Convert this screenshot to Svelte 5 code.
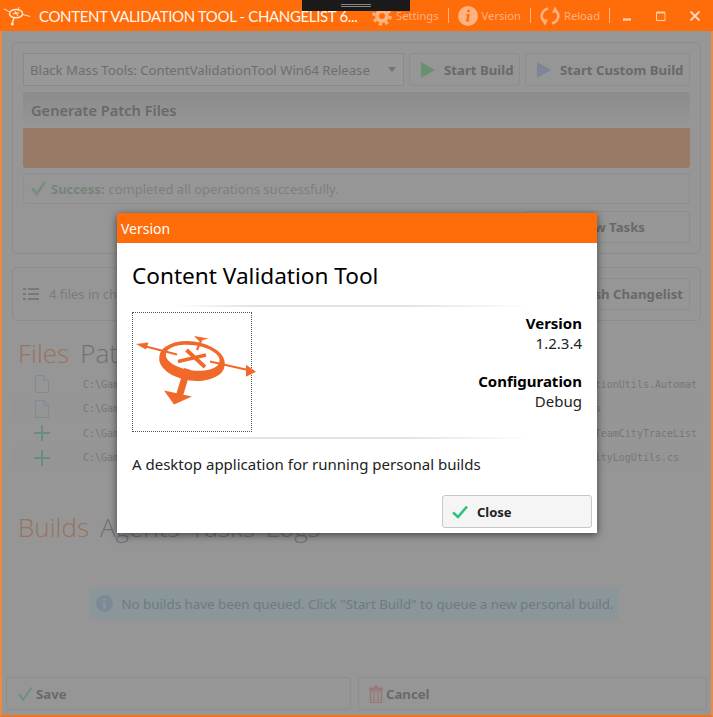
<script>
  const base = "C:\\Games\\BlackMass\\Engine\\Source\\Programs\\ContentValidationTool\\";
  const files = [
    { kind: "edit", path: base + "Automation\\Tests\\LocationUtils.Automation.cs" },
    { kind: "edit", path: base + "Automation\\Tests\\Io.cs" },
    { kind: "add", path: base + "Diagnostic\\Listeners\\TeamCityTraceListener.cs" },
    { kind: "add", path: base + "Diagnostic\\Logs\\TeamCityLogUtils.cs" }
  ];
</script>

<div class="window">
  <header class="titlebar">
    <svg class="app-logo" viewBox="0 0 32 22" width="30" height="21">
      <g fill="none" stroke="#ffe6d2">
        <ellipse cx="15" cy="9" rx="7" ry="4.5" stroke-width="1.6" />
        <path d="M12 9l6-1M14 6.5l3 5" stroke-width="1.2" />
        <path d="M8 7L2 4M22 10l8 2M17 5l1-3" stroke-width="1" />
        <path d="M13 13l-2 6" stroke-width="1.6" />
      </g>
      <circle cx="11" cy="20" r="1.6" fill="#ffe6d2" />
    </svg>
    <span class="app-title">CONTENT VALIDATION TOOL - CHANGELIST 6...</span>
    <nav class="commands">
      <span class="command">
        <svg viewBox="0 0 20 20" width="20" height="20">
          <circle cx="10" cy="10" r="8.2" fill="none" stroke="#ffb27f" stroke-width="3" stroke-dasharray="3.2 3.24" />
          <circle cx="10" cy="10" r="5" fill="none" stroke="#ffb27f" stroke-width="4" />
        </svg>
        Settings
      </span>
      <i class="sep"></i>
      <span class="command">
        <svg viewBox="0 0 20 20" width="20" height="20">
          <circle cx="10" cy="10" r="10" fill="#ffb27f" />
          <path d="M10.6 3.6a1.4 1.4 0 1 1 0 2.8a1.4 1.4 0 0 1 0-2.8zM8 8.2h3.8l-1.3 6.2h1.2l-.2 1.2H7.8l1.3-6.2H7.8z" fill="#ff6c0a" />
        </svg>
        Version
      </span>
      <i class="sep"></i>
      <span class="command">
        <svg viewBox="0 0 20 20" width="20" height="20">
          <g fill="none" stroke="#ffb27f" stroke-width="2.6">
            <path d="M8 2.5C2 4-.5 11 4 15" />
            <path d="M12 17.5C18 16 20.500 9 16 5" />
          </g>
          <path d="M1 13l7 .5-3 6zM19 7l-7-.5 3-6z" fill="#ffb27f" />
        </svg>
        Reload
      </span>
      <i class="sep"></i>
    </nav>
    <div class="window-buttons">
      <svg viewBox="0 0 10 10" width="10" height="10"><path d="M1 8.5h8" stroke="#ffd0ae" stroke-width="2.4" /></svg>
      <svg viewBox="0 0 10 10" width="10" height="10"><path d="M.5 1.5h8.500v8H.5z" fill="none" stroke="#ffd0ae" /><path d="M.5 1.5h8.500" stroke="#ffd0ae" stroke-width="2" /></svg>
      <svg viewBox="0 0 10 10" width="10" height="10"><path d="M.5.5l9 9M9.5.5l-9 9" stroke="#ffe0c8" stroke-width="1.8" /></svg>
    </div>
  </header>

  <main class="content">
    <section class="panel build-panel">
      <div class="build-row">
        <div class="select">
          <span>Black Mass Tools: ContentValidationTool Win64 Release</span>
          <i class="caret"></i>
        </div>
        <button class="btn start">
          <svg viewBox="0 0 14 16" width="14" height="16"><path d="M0 0l14 8-14 8z" fill="#b0f0bc" /></svg>
          Start Build
        </button>
        <button class="btn custom">
          <svg viewBox="0 0 14 16" width="14" height="16"><path d="M0 0l14 8-14 8z" fill="#d0e0ff" /></svg>
          Start Custom Build
        </button>
      </div>
      <div class="progress">
        <div class="progress-head">Generate Patch Files</div>
        <div class="progress-bar"></div>
      </div>
      <div class="success">
        <svg viewBox="0 0 16 16" width="17" height="17"><path d="M1 8.5l2.500-1.500 2.500 4L13.500 1l1.500 1L6.500 15.500z" fill="#c8ecce" /></svg>
        <b>Success:</b>
        <span>completed all operations successfully.</span>
      </div>
      <div class="tasks-row">
        <button class="btn tasks">View Tasks</button>
      </div>
    </section>

    <section class="panel changelist">
      <svg viewBox="0 0 16 14" width="16" height="14">
        <path d="M5 2h11M5 7h11M5 12h11" stroke="#c8c8c8" stroke-width="2" />
        <path d="M0 2h3M0 7h3M0 12h3" stroke="#c8c8c8" stroke-width="2" />
      </svg>
      <span class="changelist-label">4 files in changelist</span>
      <button class="btn refresh">Refresh Changelist</button>
    </section>

    <div class="tabs file-tabs">
      <span class="on">Files</span><span>Patches</span>
    </div>
    <ul class="files">
      {#each files as file}
        <li>
          <span class="file-icon">
            {#if file.kind === "edit"}
              <svg viewBox="0 0 14 18" width="14" height="18"><path d="M.5.5h8l5 5v12H.5zM8.500.5v5h5" fill="none" stroke="#d4e8fa" /></svg>
            {:else}
              <svg viewBox="0 0 16 16" width="16" height="16"><path d="M8 0v16M0 8h16" stroke="#aaf0d0" stroke-width="2" /></svg>
            {/if}
          </span>
          <span class="file-path">{file.path}</span>
        </li>
      {/each}
    </ul>

    <div class="tabs build-tabs">
      <span class="on">Builds</span><span>Agents</span><span>Tasks</span><span>Logs</span>
    </div>
    <div class="queue">
      <div class="info">
        <svg viewBox="0 0 16 16" width="17" height="17">
          <circle cx="8" cy="8" r="8" fill="#cfe6f8" />
          <path d="M6.800 3h2.400v2.300H6.800zM6.800 7h2.400v6H6.800z" fill="#e6fbff" />
        </svg>
        No builds have been queued. Click "Start Build" to queue a new personal build.
      </div>
    </div>
    <footer class="actions">
      <button class="btn action save">
        <svg viewBox="0 0 16 16" width="16" height="16"><path d="M1 8.5l2-1 3 4.500L14 1l1.500 1L6 15.500z" fill="#b4f0d0" /></svg>
        Save
      </button>
      <button class="btn action">
        <svg viewBox="0 0 14 18" width="14" height="18">
          <path d="M5 1.500h4M0 3.500h14" stroke="#ffc4c4" stroke-width="2" />
          <path d="M1.500 5.500h11v12h-11zM5 7v9M9 7v9" fill="none" stroke="#ffc4c4" stroke-width="1.3" />
        </svg>
        Cancel
      </button>
    </footer>
  </main>

  <div class="overlay"></div>

  <div class="drag-bar"><i></i><i></i></div>

  <div class="dialog">
    <div class="dialog-head">Version</div>
    <div class="dialog-body">
      <h1>Content Validation Tool</h1>
      <hr class="rule" />
      <div class="about">
        <div class="logo-box">
          <svg viewBox="0 0 120 120" width="120" height="120">
            <g fill="#f0692b" stroke="#f0692b">
              <path fill-rule="evenodd" stroke="none" d="M27.300 44.700A33 19 8 1 0 92.700 53.300A33 19 8 1 0 27.300 44.700zM34 41.900A27 12 8 1 1 87.400 49.500A27 12 8 1 1 34 41.900z" />
              <path d="M46 49.500L74 43M54.500 38L73 55" stroke-width="3.800" />
              <path d="M45 42.500L8 33M65 38l5-12M78 49.500l38 8.500" stroke-width="2.200" />
              <path d="M55.500 57L47 85" stroke-width="7" />
              <path stroke="none" d="M4 32l12.500-1.500L14 37.500zM62 24l14.500 2.500L67 29zM124 59.700l-10-7 0 12zM42 92.500L32 78.500l28 6z" />
            </g>
          </svg>
        </div>
        <dl>
          <dt>Version</dt>
          <dd>1.2.3.4</dd>
          <dt>Configuration</dt>
          <dd>Debug</dd>
        </dl>
      </div>
      <hr class="rule" />
      <p>A desktop application for running personal builds</p>
      <div class="dialog-actions">
        <button class="close">
          <svg viewBox="0 0 16 14" width="16" height="14"><path d="M1 7.500l5 4.500L15 1.500" fill="none" stroke="#2fc27a" stroke-width="2.600" /></svg>
          Close
        </button>
      </div>
    </div>
  </div>
</div>

<style>
  :global(body) {
    margin: 0;
  }

  .window {
    position: relative;
    width: 713px;
    height: 717px;
    box-sizing: border-box;
    display: flex;
    flex-direction: column;
    overflow: hidden;
    background: #fafafa;
    font-family: "Noto Sans", "Open Sans", sans-serif;
  }

  .titlebar {
    height: 31px;
    flex: none;
    display: flex;
    align-items: center;
    background: #ff6c0a;
    padding-left: 2px;
  }

  .app-logo {
    flex: none;
  }

  .app-title {
    width: 318px;
    flex: none;
    margin-left: 7px;
    font-family: "Lato", sans-serif;
    font-size: 15px;
    letter-spacing: -0.35px;
    color: #fff6ee;
    white-space: nowrap;
  }

  .commands {
    display: flex;
    align-items: center;
    margin-left: 15px;
    gap: 9px;
  }

  .command {
    display: flex;
    align-items: center;
    gap: 4px;
    font-size: 11.2px;
    color: #ffb27f;
  }

  .sep {
    width: 1px;
    height: 15px;
    background: #ffb27f;
  }

  .window-buttons {
    display: flex;
    gap: 24px;
    margin-left: 12px;
  }

  .content {
    flex: 1;
    min-height: 0;
    display: flex;
    flex-direction: column;
    padding: 11px 0 0;
    border: solid #ea8a45;
    border-width: 0 2px 2px;
    border-bottom-color: #f0751f;
    color: #b8b8b8;
  }

  .panel {
    margin: 0 10px;
    border: 1px solid #eaeaea;
    border-radius: 5px;
    box-sizing: border-box;
  }

  .build-panel {
    height: 212px;
    padding: 10px;
    display: flex;
    flex-direction: column;
  }

  .build-row {
    display: flex;
    gap: 5px;
    height: 33px;
  }

  .select {
    width: 381px;
    flex: none;
    box-sizing: border-box;
    border: 1px solid #e6e6e6;
    padding: 0 6px;
    display: flex;
    align-items: center;
    justify-content: space-between;
    font-size: 13.15px;
    color: #b8b8b8;
    background: #fdfdfd;
  }

  .caret {
    width: 0;
    height: 0;
    border: 4px solid transparent;
    border-top: 5px solid #c0c0c0;
    border-bottom: 0;
    margin-right: 1px;
  }

  .btn {
    display: flex;
    align-items: center;
    gap: 9px;
    box-sizing: border-box;
    background: #fafafa;
    border: 1px solid #ebebeb;
    border-radius: 3px;
    font: 700 13.2px "Noto Sans", "Open Sans", sans-serif;
    color: #b0b0b0;
    padding: 0 0 0 11px;
    white-space: nowrap;
  }

  .start {
    width: 111px;
  }

  .custom {
    width: 165px;
  }

  .progress {
    margin-top: 6px;
    border-radius: 3px;
    overflow: hidden;
  }

  .progress-head {
    height: 36px;
    padding-left: 8px;
    display: flex;
    align-items: center;
    background: linear-gradient(#e9e9e9, #fcfcfc);
    font-size: 14.6px;
    font-weight: 600;
    color: #b0b0b0;
  }

  .progress-bar {
    height: 40px;
    background: #ffcbaa;
  }

  .success {
    margin-top: 5px;
    height: 31px;
    box-sizing: border-box;
    display: flex;
    align-items: center;
    gap: 4px;
    padding-left: 6px;
    border: 1px solid #eeeeee;
    border-radius: 3px;
    font-size: 13px;
    color: #d4d4d4;
  }

  .success b {
    color: #c4dcc8;
  }

  .tasks-row {
    display: flex;
    justify-content: flex-end;
    margin-top: 7px;
  }

  .tasks {
    width: 165px;
    height: 32px;
    justify-content: flex-end;
    padding: 0 44px 0 0;
  }

  .changelist {
    margin-top: 13px;
    height: 54px;
    display: flex;
    align-items: center;
    padding: 0 10px;
    gap: 10px;
    font-size: 13px;
    color: #cfcfcf;
  }

  .changelist-label {
    flex: 1;
  }

  .refresh {
    height: 32px;
    padding: 0 6px 0 30px;
  }

  .tabs {
    display: flex;
    gap: 11px;
    padding-left: 16px;
    font-size: 26px;
    font-weight: 300;
    line-height: 34px;
    color: #b9bbc8;
    font-family: "Open Sans", sans-serif;
  }

  .tabs .on {
    color: #ffc0a0;
  }

  .file-tabs {
    margin-top: 15px;
  }

  .files {
    list-style: none;
    margin: 2px 10px 0;
    padding: 0;
  }

  .files li {
    height: 24.5px;
    display: flex;
    align-items: center;
    overflow: hidden;
  }

  .files li:nth-child(even) {
    background: #f8f8f8;
  }

  .file-icon {
    width: 71px;
    flex: none;
    display: flex;
    justify-content: center;
    padding-right: 12px;
    box-sizing: border-box;
  }

  .file-path {
    width: 614px;
    flex: none;
    overflow: hidden;
    font: 10px "DejaVu Sans Mono", "Liberation Mono", monospace;
    color: #c8c8c8;
    white-space: nowrap;
  }

  .build-tabs {
    margin-top: 40px;
  }

  .queue {
    flex: 1;
    display: flex;
    justify-content: center;
    align-items: center;
    padding-bottom: 14px;
  }

  .info {
    display: flex;
    align-items: center;
    gap: 8px;
    height: 32px;
    box-sizing: border-box;
    padding: 0 5px 0 7px;
    background: #e6fbff;
    border-radius: 4px;
    font-size: 13.35px;
    color: #b8ccdc;
    margin-right: 5px;
  }

  .actions {
    display: flex;
    gap: 7px;
    height: 33px;
    padding: 0 4px;
    flex: none;
    margin-bottom: 5px;
  }

  .action {
    flex: 1;
    gap: 3px;
    padding: 0 0 0 10px;
  }

  .save {
    flex: none;
    width: 345px;
  }

  .overlay {
    position: absolute;
    left: 2px;
    right: 2px;
    top: 31px;
    bottom: 2px;
    background: rgba(0, 0, 0, 0.4);
  }

  .drag-bar {
    position: absolute;
    top: 0;
    left: 302px;
    width: 108px;
    height: 11px;
    background: #1a1a1a;
    display: flex;
    flex-direction: column;
    align-items: center;
    gap: 1px;
    padding-top: 4px;
    box-sizing: border-box;
  }

  .drag-bar i {
    width: 30px;
    height: 1px;
    background: #888;
  }

  .dialog {
    position: absolute;
    left: 117px;
    top: 213px;
    width: 480px;
    height: 320px;
    background: #fff;
    box-shadow: 0 2px 8px rgba(0, 0, 0, 0.55);
    display: flex;
    flex-direction: column;
  }

  .dialog-head {
    height: 30px;
    flex: none;
    display: flex;
    align-items: center;
    padding: 1px 0 0 4px;
    box-sizing: border-box;
    background: #ff6c0a;
    color: #fff;
    font-size: 14px;
  }

  .dialog-body {
    flex: 1;
    padding: 0 5px 5px 15px;
    display: flex;
    flex-direction: column;
    color: #111;
  }

  h1 {
    margin: 17px 0 0;
    font-size: 22.6px;
    font-weight: 400;
    line-height: 32px;
    color: #000;
  }

  .rule {
    margin: 0;
    border: 0;
    height: 2px;
    width: 400px;
    background: linear-gradient(90deg, #fff 10%, #e4e4e4 30%, #e4e4e4 70%, #fff);
  }

  h1 + .rule {
    margin-top: 13px;
  }

  .about {
    display: flex;
    justify-content: space-between;
    margin-top: 5px;
    padding-right: 10px;
    height: 125px;
  }

  .logo-box {
    width: 120px;
    height: 120px;
    box-sizing: border-box;
    border: 1px dotted #555;
  }

  .logo-box svg {
    display: block;
    margin: -1px;
    overflow: visible;
  }

  dl {
    margin: 1px 0 0;
    text-align: right;
    font-size: 15px;
    line-height: 20px;
  }

  dt {
    font-weight: 700;
    color: #000;
  }

  dd {
    margin: 0 0 18px;
    color: #222;
  }

  p {
    margin: 14px 0 0;
    font-size: 15px;
    line-height: 22px;
    color: #222;
  }

  .dialog-actions {
    margin-top: auto;
    display: flex;
    justify-content: flex-end;
  }

  .close {
    width: 150px;
    height: 33px;
    display: flex;
    align-items: center;
    gap: 9px;
    padding: 0 9px;
    box-sizing: border-box;
    background: #f5f5f5;
    border: 1px solid #c8c8c8;
    border-radius: 3px;
    font: 700 13px "Noto Sans", "Open Sans", sans-serif;
    color: #222;
  }
</style>
